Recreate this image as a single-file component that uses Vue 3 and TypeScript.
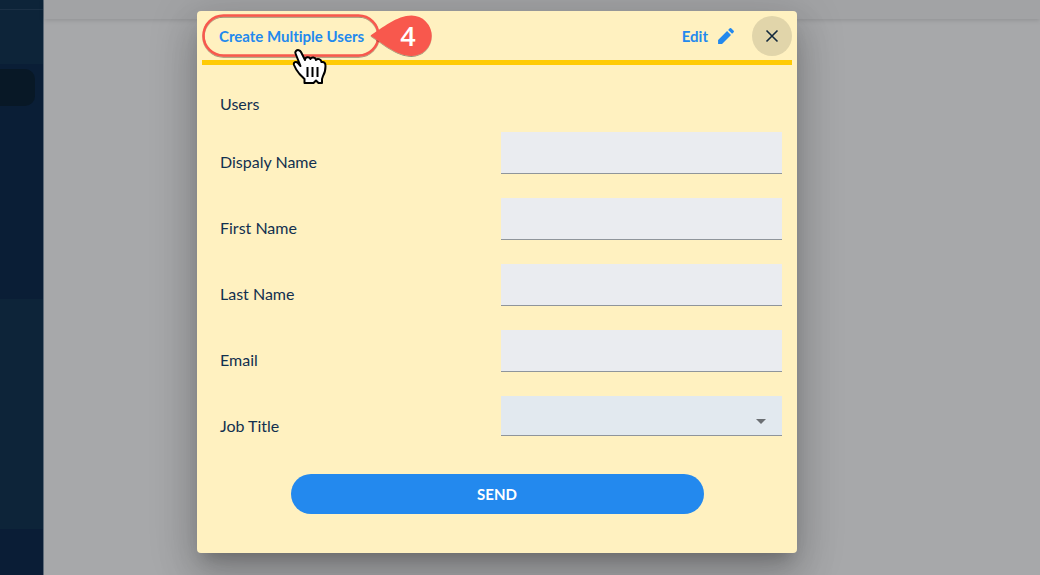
<script setup lang="ts">
import { reactive } from 'vue'

interface Field {
  id: 'displayName' | 'firstName' | 'lastName' | 'email'
  label: string
  type: string
}

const fields: Field[] = [
  { id: 'displayName', label: 'Dispaly Name', type: 'text' },
  { id: 'firstName', label: 'First Name', type: 'text' },
  { id: 'lastName', label: 'Last Name', type: 'text' },
  { id: 'email', label: 'Email', type: 'email' },
]

const form = reactive({ displayName: '', firstName: '', lastName: '', email: '', jobTitle: '' })
</script>

<template>
  <div class="shell">
    <nav class="sidebar">
      <div class="side-top"></div>
      <div class="side-head"></div>
      <div class="side-menu"><div class="side-active"></div></div>
      <div class="side-body"></div>
      <div class="side-foot"></div>
    </nav>
    <div class="workspace"><div class="topbar"></div></div>

    <div class="overlay">
      <section class="dialog" role="dialog">
        <header class="dialog-head">
          <button type="button" class="link create">Create Multiple Users</button>
          <button type="button" class="link edit">
            Edit
            <svg width="20" height="20" viewBox="0 0 24 24" fill="currentColor">
              <path d="M2.500 16.800V21.500h4.700L18 10.700 13.300 6zM21.200 7.500a1.200 1.200 0 0 0 0-1.700l-3-3a1.200 1.200 0 0 0-1.700 0l-1.900 1.900 4.700 4.700z" />
            </svg>
          </button>
          <button type="button" class="close" aria-label="Close">
            <svg width="14" height="14" viewBox="0 0 14 14" fill="none" stroke="currentColor" stroke-width="1.600">
              <path d="M1.500 1.500l11 11M12.500 1.500l-11 11" />
            </svg>
          </button>
        </header>

        <form class="form" @submit.prevent>
          <h2>Users</h2>
          <div v-for="f in fields" :key="f.id" class="row">
            <label :for="f.id">{{ f.label }}</label>
            <input :id="f.id" v-model="form[f.id]" :type="f.type" />
          </div>
          <div class="row">
            <label for="jobTitle">Job Title</label>
            <div class="select">
              <select id="jobTitle" v-model="form.jobTitle"><option value=""></option></select>
              <svg width="10" height="5" viewBox="0 0 10 5"><path d="M0 0h10L5 5z" fill="#6b6f73" /></svg>
            </div>
          </div>
          <button type="submit" class="send">SEND</button>
        </form>

        <svg class="callout" width="240" height="80" viewBox="0 0 240 80">
          <defs>
            <filter id="soft" x="-20%" y="-20%" width="140%" height="140%">
              <feDropShadow dx="0" dy="1" stdDeviation="0.600" flood-color="#000" flood-opacity="0.400" />
            </filter>
          </defs>
          <rect x="6.500" y="4.500" width="175" height="40" rx="20" fill="none" stroke="#f8584e" stroke-width="2.500" filter="url(#soft)" />
          <path d="M173.500 24.500C185 17 200 4.500 214.500 4.500a20.200 20.200 0 0 1 0 40.400C200 44.900 185 32 173.500 24.500z" fill="#f8584e" filter="url(#soft)" />
          <text x="211" y="35" text-anchor="middle">4</text>
          <path d="M99 40c1.500-1.500 4-1 5 1l4 8c0-3 4-4 5.500-1 1-2.500 5-2 5.500 1 1.500-2 5-1 5.500 2 3-.5 4 1.500 4 4 0 4-.5 7-2.500 10l-1 3v4h-3.500l-2.500-2.500-2.500 2.500h-9v-4l-5-5c-2-2.500-4-5-5.500-9-.8-3 2-4 4-2l2.500 3-5-12.500c-.5-1 0-2 .5-2.500z" fill="#fff" stroke="#000" stroke-width="2" stroke-linejoin="round" />
          <path d="M110.500 56v10M115.500 56v10M120.500 56v10" stroke="#000" stroke-width="2" />
        </svg>
      </section>
    </div>
  </div>
</template>

<style>
body {
  margin: 0;
}
</style>

<style scoped>
.shell {
  position: relative;
  display: flex;
  min-height: 100vh;
  font-family: Lato, "Open Sans", sans-serif;
  font-variant-ligatures: none;
  color: #12304f;
  background: #a7a8aa;
}
.sidebar {
  box-sizing: border-box;
  display: flex;
  flex-direction: column;
  flex: none;
  width: 44px;
  border-right: 1px solid #5e6b78;
  background: #0d2439;
}
.side-top {
  height: 9px;
  border-bottom: 1px solid #1b3045;
}
.side-head {
  height: 54px;
}
.side-menu {
  box-sizing: border-box;
  height: 235px;
  padding: 5px 8px 0 0;
  background: #0a1e36;
}
.side-active {
  height: 37px;
  border-radius: 0 10px 10px 0;
  background: #081826;
}
.side-body {
  flex: 1;
}
.side-foot {
  height: 46px;
  background: #0a1d36;
}
.workspace {
  flex: 1;
}
.topbar {
  height: 19px;
  background: #a2a3a5;
  box-shadow: 0 1px 5px rgba(0, 0, 0, 0.15);
}
.overlay {
  position: absolute;
  inset: 0;
  display: flex;
  justify-content: center;
  align-items: flex-start;
  padding: 11px 46px 22px 0;
}
.dialog {
  position: relative;
  box-sizing: border-box;
  width: 100%;
  max-width: 600px;
  padding: 5px 5px 39px;
  border-radius: 4px;
  background: #fff1c0;
  box-shadow: 0 11px 15px -7px rgba(0, 0, 0, 0.2), 0 24px 38px 3px rgba(0, 0, 0, 0.14), 0 9px 46px 8px rgba(0, 0, 0, 0.12);
}
.dialog-head {
  display: flex;
  align-items: center;
  padding-bottom: 4px;
  border-bottom: 5px solid #ffcb05;
}
button {
  border: 0;
  font-family: inherit;
  font-variant-ligatures: inherit;
  cursor: pointer;
}
.link {
  display: flex;
  align-items: center;
  gap: 8px;
  padding: 0;
  background: none;
  color: #2389ee;
  font-size: 15px;
  line-height: 24px;
  font-weight: 700;
}
.create {
  margin-left: 17px;
}
.edit {
  margin: 0 16px 0 auto;
}
.close {
  display: grid;
  place-items: center;
  width: 40px;
  height: 40px;
  padding: 0;
  border-radius: 50%;
  background: #e1d5aa;
  color: #12283c;
}
.form {
  display: flex;
  flex-direction: column;
  gap: 24px;
  padding: 27px 10px 0 18px;
}
h2 {
  margin: 0 0 -8px;
  font-size: 16px;
  line-height: 24px;
  font-weight: 400;
}
.row {
  display: grid;
  grid-template-columns: 1fr 1fr;
  height: 42px;
}
label {
  align-self: end;
  font-size: 16px;
  line-height: 24px;
}
input,
select {
  box-sizing: border-box;
  width: 100%;
  height: 42px;
  padding: 0 12px;
  border: 0;
  border-bottom: 1px solid #8f959b;
  border-radius: 0;
  outline: 0;
  background: #eaecf0;
  color: inherit;
  font: inherit;
}
.select {
  position: relative;
}
select {
  height: 40px;
  appearance: none;
  background: #e2e9ef;
}
.select svg {
  position: absolute;
  right: 16px;
  top: 23px;
  pointer-events: none;
}
.send {
  align-self: center;
  width: 413px;
  max-width: 100%;
  height: 40px;
  margin: 12px 8px 0 0;
  border-radius: 20px;
  background: #2389ee;
  color: #fff;
  font-size: 15px;
  font-weight: 700;
}
.callout {
  position: absolute;
  left: 0;
  top: 0;
  pointer-events: none;
}
.callout text {
  fill: #fff;
  font-family: "Open Sans", sans-serif;
  font-size: 27px;
  font-weight: 600;
}
</style>
